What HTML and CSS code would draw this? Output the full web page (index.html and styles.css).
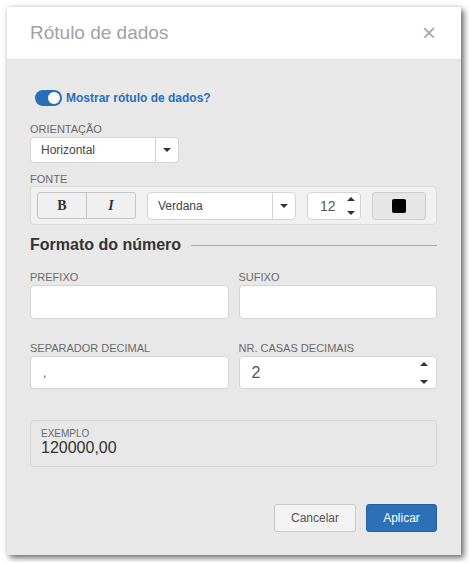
FILE: index.html
```html
<!DOCTYPE html>
<html lang="pt-BR">
<head>
  <meta charset="UTF-8">
  <title>Rótulo de dados</title>
  <link rel="stylesheet" href="styles.css">
</head>
<body>
  <div class="modal">
    <div class="modal-header">
      <h1>Rótulo de dados</h1>
      <span class="close">&times;</span>
    </div>

    <div class="modal-body">
      <div class="toggle-row">
        <span class="switch"><span class="knob"></span></span>
        <span class="toggle-label">Mostrar rótulo de dados?</span>
      </div>

      <label class="field-label">Orientação</label>
      <div class="select select-orient">
        <span class="select-text">Horizontal</span>
        <span class="select-arrow"><i class="caret"></i></span>
      </div>

      <label class="field-label">Fonte</label>
      <div class="font-group">
        <div class="btn-group">
          <button class="style-btn bold">B</button>
          <button class="style-btn italic">I</button>
        </div>
        <div class="select select-font">
          <span class="select-text">Verdana</span>
          <span class="select-arrow"><i class="caret"></i></span>
        </div>
        <div class="spin spin-size">
          <span class="spin-value">12</span>
          <span class="spin-arrows"><i class="caret up"></i><i class="caret"></i></span>
        </div>
        <button class="color-btn"><span class="swatch"></span></button>
      </div>

      <div class="section-title">
        <h2>Formato do número</h2>
        <span class="rule"></span>
      </div>

      <div class="row">
        <div class="col">
          <label class="field-label">Prefixo</label>
          <div class="input"></div>
        </div>
        <div class="col">
          <label class="field-label">Sufixo</label>
          <div class="input"></div>
        </div>
      </div>

      <div class="row row-second">
        <div class="col">
          <label class="field-label">Separador decimal</label>
          <div class="input"><span class="comma">,</span></div>
        </div>
        <div class="col">
          <label class="field-label">Nr. casas decimais</label>
          <div class="input spin-input">
            <span class="spin-value">2</span>
            <span class="spin-arrows"><i class="caret up"></i><i class="caret"></i></span>
          </div>
        </div>
      </div>

      <div class="example">
        <span class="example-label">Exemplo</span>
        <span class="example-value">120000,00</span>
      </div>

      <div class="modal-footer">
        <button class="btn btn-default">Cancelar</button>
        <button class="btn btn-primary">Aplicar</button>
      </div>
    </div>
  </div>
</body>
</html>
```

FILE: styles.css
```css
* {
  box-sizing: border-box;
}

body {
  margin: 0;
  background: #fff;
  font-family: 'Liberation Sans', Arial, sans-serif;
  color: #333;
}

.modal {
  margin: 7px;
  width: 454px;
  height: 548px;
  display: flex;
  flex-direction: column;
  box-shadow: 3px 3px 6px rgba(0, 0, 0, 0.55), 0 0 4px rgba(0, 0, 0, 0.15);
}

.modal-header {
  height: 53px;
  padding: 0 24px 0 23px;
  display: flex;
  align-items: center;
  justify-content: space-between;
  background: #fff;
  border-bottom: 1px solid #e2e2e2;
}

h1 {
  margin: 0;
  font-size: 19px;
  font-weight: normal;
  color: #a2a2a2;
}

.close {
  font-size: 24px;
  color: #a8a8a8;
  line-height: 1;
  margin-right: 1px;
}

.modal-body {
  flex: 1;
  background: #e8e8e8;
  padding: 30px 24px 0 23px;
  display: flex;
  flex-direction: column;
}

.toggle-row {
  display: flex;
  align-items: center;
  gap: 4px;
  height: 16px;
  padding-left: 5px;
}

.switch {
  width: 27px;
  height: 16px;
  border-radius: 8px;
  background: #2a6eb8;
  position: relative;
}

.knob {
  position: absolute;
  right: 2px;
  top: 2px;
  width: 12px;
  height: 12px;
  border-radius: 50%;
  background: #fff;
}

.toggle-label {
  font-size: 12px;
  font-weight: bold;
  color: #2a6eb8;
}

.field-label {
  display: block;
  font-size: 11px;
  line-height: 14px;
  color: #6a6a6a;
  text-transform: uppercase;
}

.toggle-row + .field-label {
  margin-top: 16px;
  margin-bottom: 1px;
}

.select {
  display: flex;
  height: 26px;
  background: #fff;
  border: 1px solid #d4d4d4;
  border-radius: 4px;
}

.select-text {
  flex: 1;
  display: flex;
  align-items: center;
  padding-left: 10px;
  font-size: 12px;
  color: #444;
}

.select-arrow {
  width: 23px;
  display: flex;
  align-items: center;
  justify-content: center;
  border-left: 1px solid #d4d4d4;
}

.caret {
  display: block;
  width: 0;
  height: 0;
  border-left: 4px solid transparent;
  border-right: 4px solid transparent;
  border-top: 4px solid #333;
}

.caret.up {
  border-top: 0;
  border-bottom: 4px solid #333;
}

.select-orient {
  width: 149px;
}

.select-orient + .field-label {
  margin-top: 9px;
}

.font-group {
  display: flex;
  align-items: center;
  gap: 11px;
  height: 39px;
  padding: 0 10px 0 6px;
  background: #f1f1f1;
  border: 1px solid #dadada;
  border-radius: 4px;
}

.btn-group {
  display: flex;
  width: 99px;
  height: 27px;
  border: 1px solid #c4c4c4;
  border-radius: 3px;
  background: #f0f0f0;
}

.style-btn {
  flex: 1;
  border: 0;
  background: none;
  font-family: 'Liberation Serif', 'Times New Roman', serif;
  font-size: 14px;
  font-weight: bold;
  color: #333;
  padding: 0;
}

.style-btn + .style-btn {
  border-left: 1px solid #c4c4c4;
}

.italic {
  font-style: italic;
}

.select-font {
  width: 149px;
  height: 28px;
}

.spin {
  display: flex;
  align-items: center;
  width: 54px;
  height: 28px;
  background: #fff;
  border: 1px solid #d4d4d4;
  border-radius: 4px;
  padding: 0 5px 0 12px;
}

.spin-value {
  flex: 1;
  font-size: 14px;
  color: #555;
}

.spin-arrows {
  display: flex;
  flex-direction: column;
  justify-content: space-between;
  height: 18px;
}

.color-btn {
  width: 54px;
  height: 28px;
  background: #e6e6e6;
  border: 1px solid #cdcdcd;
  border-radius: 3px;
  display: flex;
  align-items: center;
  justify-content: center;
  padding: 0;
}

.swatch {
  width: 14px;
  height: 14px;
  background: #000;
  border-radius: 2px;
}

.section-title {
  display: flex;
  align-items: center;
  gap: 10px;
  margin-top: 11px;
  height: 18px;
}

h2 {
  margin: 0;
  font-size: 16px;
  color: #333;
  white-space: nowrap;
}

.rule {
  flex: 1;
  height: 1px;
  background: #a8a8a8;
  margin-top: 1px;
}

.row {
  display: flex;
  gap: 10px;
  margin-top: 16px;
}

.row-second {
  margin-top: 22px;
}

.col {
  flex: 1;
}

.input {
  height: 34px;
  margin-top: 1px;
  background: #fff;
  border: 1px solid #d4d4d4;
  border-radius: 4px;
  display: flex;
  align-items: center;
  padding: 0 8px 0 12px;
}

.row-second .input {
  height: 33px;
}

.comma {
  font-size: 12px;
  color: #555;
}

.spin-input .spin-value {
  font-size: 16px;
}

.spin-input .spin-arrows {
  height: 22px;
}

.example {
  margin-top: 31px;
  height: 47px;
  border: 1px solid #d6d6d6;
  border-radius: 4px;
  padding: 8px 10px;
  display: flex;
  flex-direction: column;
}

.example-label {
  font-size: 10px;
  line-height: 10px;
  color: #6a6a6a;
  text-transform: uppercase;
}

.example-value {
  font-size: 16px;
  line-height: 18px;
  color: #333;
}

.modal-footer {
  display: flex;
  justify-content: flex-end;
  gap: 10px;
  margin-top: 37px;
}

.btn {
  height: 28px;
  border-radius: 3px;
  font-family: 'Liberation Sans', Arial, sans-serif;
  font-size: 12px;
  padding: 0;
}

.btn-default {
  width: 82px;
  background: #f3f3f3;
  border: 1px solid #c8c8c8;
  color: #555;
}

.btn-primary {
  width: 71px;
  background: #2c71b8;
  border: 1px solid #24609e;
  color: #fff;
}
```
